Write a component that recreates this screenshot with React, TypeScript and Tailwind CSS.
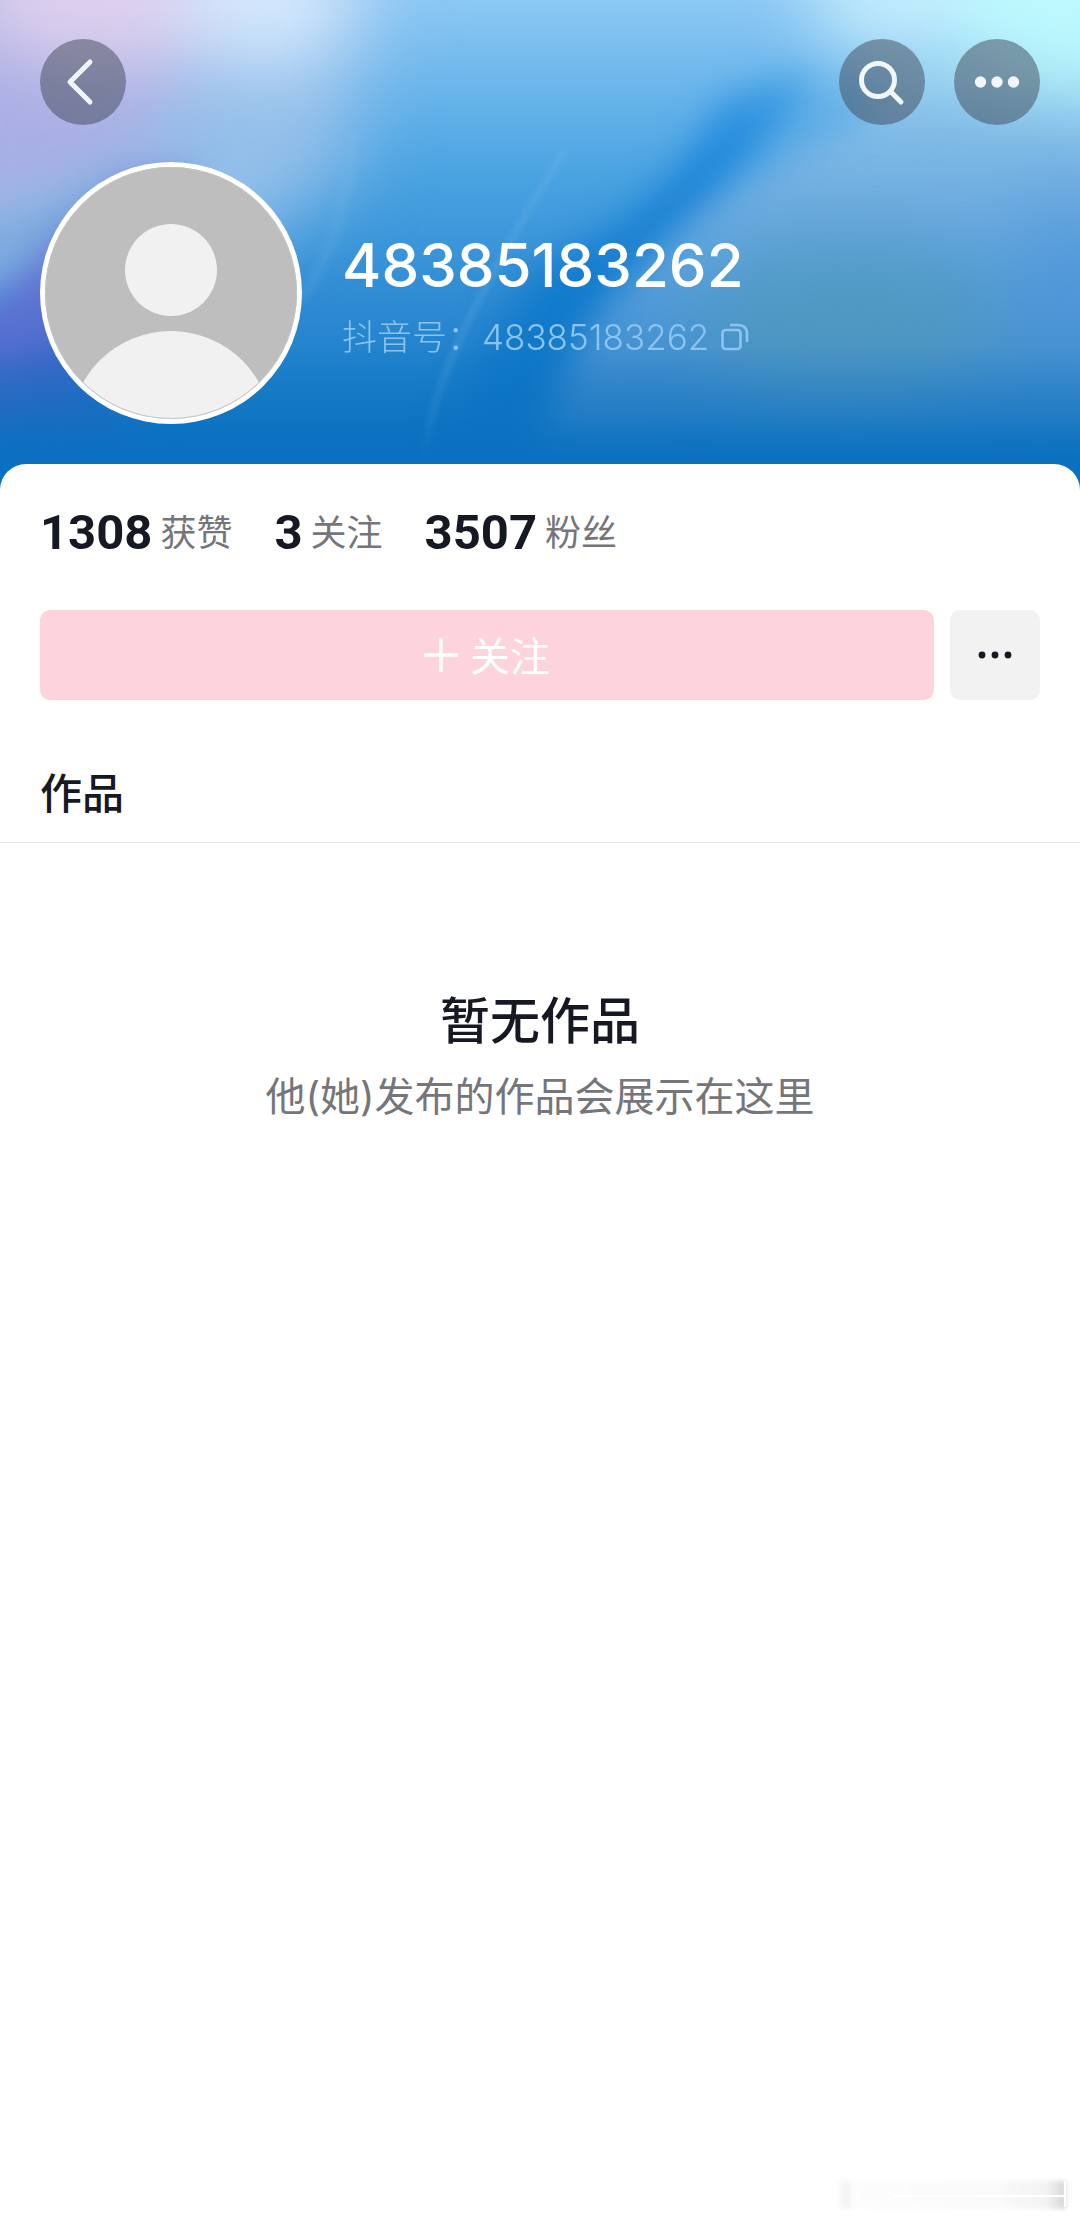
import type { ReactNode } from 'react';

const stats = [
  { value: '1308', label: '获赞' },
  { value: '3', label: '关注' },
  { value: '3507', label: '粉丝' },
];

function CoverArt() {
  return (
    <svg
      className="absolute inset-0 h-full w-full"
      viewBox="0 0 1080 500"
      preserveAspectRatio="none"
      colorInterpolationFilters="sRGB"
      aria-hidden="true"
    >
      <defs>
        <linearGradient id="base" x1="0" y1="0" x2="0" y2="1">
          <stop offset="0" stopColor="#8cc8f4" />
          <stop offset="0.2" stopColor="#66b3ea" />
          <stop offset="0.35" stopColor="#4aa3e1" />
          <stop offset="0.6" stopColor="#2f8bd3" />
          <stop offset="0.9" stopColor="#0c74c3" />
          <stop offset="1" stopColor="#0a70bf" />
        </linearGradient>
        <linearGradient id="hill" x1="0" y1="0" x2="0" y2="1">
          <stop offset="0" stopColor="#98d2f0" />
          <stop offset="0.3" stopColor="#78b3e3" />
          <stop offset="0.55" stopColor="#559edb" />
          <stop offset="0.8" stopColor="#3787c9" />
          <stop offset="1" stopColor="#0c74c3" />
        </linearGradient>
        <linearGradient id="stream" x1="0" y1="0" x2="0" y2="1">
          <stop offset="0" stopColor="#3f9fe4" />
          <stop offset="0.2" stopColor="#2389dc" />
          <stop offset="0.5" stopColor="#147ccd" />
          <stop offset="1" stopColor="#0c72c2" />
        </linearGradient>
        <linearGradient id="floor" x1="0" y1="0" x2="0" y2="1">
          <stop offset="0" stopColor="#0a70bf" stopOpacity="0" />
          <stop offset="0.6" stopColor="#0a70bf" stopOpacity="0.4" />
          <stop offset="1" stopColor="#0a70bf" />
        </linearGradient>
        <filter id="soft" x="-60%" y="-60%" width="220%" height="220%">
          <feGaussianBlur stdDeviation="38" />
        </filter>
        <filter id="mid" x="-40%" y="-40%" width="180%" height="180%">
          <feGaussianBlur stdDeviation="18" />
        </filter>
        <filter id="fine" x="-40%" y="-40%" width="180%" height="180%">
          <feGaussianBlur stdDeviation="3" />
        </filter>
      </defs>
      <rect width="1080" height="500" fill="url(#base)" />

      {/* pale lavender light on the left */}
      <g filter="url(#soft)">
        <path d="M-80 -80 H400 L360 60 L350 170 L240 250 L-80 300 Z" fill="#94bfe9" />
        <path d="M-80 -80 H180 L170 110 L120 180 L-80 230 Z" fill="#a9aee4" />
        <ellipse cx="110" cy="-5" rx="150" ry="75" fill="#ded0ee" />
        <ellipse cx="270" cy="-5" rx="90" ry="75" fill="#d4e8fd" />
      </g>
      <g filter="url(#mid)">
        <path d="M-40 330 Q40 250 130 180 L200 170 L80 390 L-40 430 Z" fill="#6069cf" opacity="0.8" />
        <path d="M-40 380 L80 340 L150 460 L-40 470 Z" fill="#2867c2" opacity="0.7" />
        <path d="M-40 230 Q50 210 130 160 L110 205 Q50 250 -40 290 Z" fill="#78a7dc" opacity="0.8" />
      </g>

      {/* deep blue stream */}
      <g filter="url(#mid)">
        <path d="M820 70 L720 100 Q660 220 550 260 Q460 350 440 490 H560 Q560 340 650 270 Q750 170 820 70 Z" fill="url(#stream)" />
      </g>

      {/* rounded hill on the right */}
      <g filter="url(#mid)">
        <path d="M530 500 Q550 360 640 270 Q740 170 860 120 L900 60 L1120 30 V500 Z" fill="url(#hill)" />
      </g>
      <g filter="url(#soft)">
        <ellipse cx="850" cy="320" rx="150" ry="80" fill="#5098b6" opacity="0.6" />
        <path d="M930 -80 H1160 V100 L1000 80 L930 40 Z" fill="#bdf9fd" />
        <ellipse cx="890" cy="-10" rx="80" ry="70" fill="#c4ecfd" />
        <ellipse cx="1070" cy="280" rx="50" ry="90" fill="#4a90d8" opacity="0.5" />
      </g>

      {/* thin highlights */}
      <g filter="url(#fine)" fill="none" stroke="#8cc7f0">
        <path d="M565 150 Q490 270 455 350 Q425 420 425 470" strokeWidth="5" opacity="0.25" />
        <path d="M352 130 Q350 230 300 300" strokeWidth="12" opacity="0.12" />
      </g>
      <rect y="350" width="1080" height="112" fill="url(#floor)" />
      <rect y="461" width="1080" height="39" fill="#0a70bf" />
    </svg>
  );
}

function RoundButton({ label, children }: { label: string; children: ReactNode }) {
  return (
    <button
      type="button"
      aria-label={label}
      className="flex size-[86px] items-center justify-center rounded-full bg-[#404858]/50 text-[#f1f6fd]"
    >
      {children}
    </button>
  );
}

function Avatar() {
  return (
    <svg className="size-[262px] shrink-0" viewBox="0 0 262 262" role="img" aria-label="头像">
      <defs>
        <clipPath id="face">
          <circle cx="131" cy="131" r="126" />
        </clipPath>
      </defs>
      <circle cx="131" cy="131" r="131" fill="#fff" />
      <g clipPath="url(#face)">
        <rect width="262" height="262" fill="#bebebe" />
        <circle cx="131" cy="108" r="46" fill="#f1f1f1" />
        <circle cx="131" cy="270" r="101" fill="#f1f1f1" />
      </g>
      <circle cx="131" cy="131" r="125.5" fill="none" stroke="#c4c4c4" />
    </svg>
  );
}

function Header() {
  return (
    <header className="relative px-10 pt-[39px] pb-[76px]">
      <CoverArt />
      <div className="relative">
        <nav className="flex items-center justify-between">
          <RoundButton label="返回">
            <svg className="size-[86px]" viewBox="0 0 86 86" fill="none" stroke="currentColor" strokeWidth="5" strokeLinecap="round" strokeLinejoin="round">
              <path d="M50 23 L30 43 L50 63" />
            </svg>
          </RoundButton>
          <div className="flex gap-[29px]">
            <RoundButton label="搜索">
              <svg className="size-[86px]" viewBox="0 0 86 86" fill="none" stroke="currentColor" strokeWidth="5" strokeLinecap="round">
                <circle cx="39" cy="41" r="16.5" />
                <path d="M52 53 L62 63" />
              </svg>
            </RoundButton>
            <RoundButton label="更多">
              <svg className="size-[86px]" viewBox="0 0 86 86" fill="currentColor">
                <circle cx="26.5" cy="43" r="5.7" />
                <circle cx="43" cy="43" r="5.7" />
                <circle cx="59.5" cy="43" r="5.7" />
              </svg>
            </RoundButton>
          </div>
        </nav>

        <div className="mt-[37px] flex items-center gap-10">
          <Avatar />
          <div className="min-w-0 pt-1 text-white">
            <h1 className="text-[60px] leading-[72px] font-medium">48385183262</h1>
            <div className="mt-3 flex items-center gap-3 text-[#8cc4ef]">
              <p className="text-[35px] leading-[48px] font-light">抖音号：48385183262</p>
              <button type="button" aria-label="复制抖音号">
                <svg className="size-7" viewBox="0 0 28 28" fill="none" stroke="currentColor" strokeWidth="2.7">
                  <rect x="1.500" y="7" width="18" height="19" rx="3" />
                  <path d="M9 2 H17 Q26 2 26 11 V19" />
                </svg>
              </button>
            </div>
          </div>
        </div>
      </div>
    </header>
  );
}

function Stats() {
  return (
    <ul className="flex gap-[42px]">
      {stats.map((s) => (
        <li key={s.label} className="flex items-center gap-2">
          <span className="font-[Roboto,sans-serif] text-[49px] leading-[58px] font-bold text-[#161823]">
            {s.value}
          </span>
          <span className="text-[36px] leading-[58px] text-[#75757a]">{s.label}</span>
        </li>
      ))}
    </ul>
  );
}

// Fading scroll mark in the bottom corner
function CornerMark() {
  return (
    <svg className="h-10 w-[240px]" viewBox="0 0 240 40" aria-hidden="true">
      <defs>
        <linearGradient id="fade" x1="0" y1="0" x2="1" y2="0">
          <stop offset="0" stopColor="#f4f4f4" stopOpacity="0" />
          <stop offset="0.04" stopColor="#f2f2f2" />
          <stop offset="0.08" stopColor="#fdfdfd" />
          <stop offset="0.7" stopColor="#fafafa" />
          <stop offset="0.92" stopColor="#f3f3f3" />
          <stop offset="1" stopColor="#d4d4d4" />
        </linearGradient>
        <filter id="smudge">
          <feGaussianBlur stdDeviation="2" />
        </filter>
      </defs>
      <rect x="4" y="4" width="230" height="28" fill="url(#fade)" filter="url(#smudge)" />
      <path d="M60 19 H232 M233 4 V30" stroke="#fff" strokeWidth="2" fill="none" />
    </svg>
  );
}

export default function App() {
  return (
    <div className="flex min-h-screen w-full flex-col bg-white font-[Inter,'Noto_Sans_CJK_SC',sans-serif]">
      <Header />

      <main className="relative -mt-9 rounded-t-[26px] bg-white">
        <section className="px-10 pt-10">
          <Stats />
          <div className="mt-12 flex gap-4">
            <button
              type="button"
              className="flex h-[90px] flex-1 items-center justify-center gap-3 rounded-[10px] bg-[#fdd3dc] text-[40px] text-white"
            >
              <svg className="size-[34px]" viewBox="0 0 34 34" stroke="currentColor" strokeWidth="3.5" aria-hidden="true">
                <path d="M17 0 V34 M0 17 H34" />
              </svg>
              <span className="pt-1">关注</span>
            </button>
            <button
              type="button"
              aria-label="更多操作"
              className="flex size-[90px] items-center justify-center rounded-[10px] bg-[#f2f2f2] text-[#161823]"
            >
              <svg className="h-2 w-[34px]" viewBox="0 0 34 8" fill="currentColor">
                <circle cx="4" cy="4" r="3.4" />
                <circle cx="17" cy="4" r="3.4" />
                <circle cx="30" cy="4" r="3.4" />
              </svg>
            </button>
          </div>
        </section>

        <h2 className="mt-16 border-b border-[#e3e3e4] px-10 pb-[18px] text-[42px] leading-[60px] font-medium text-[#161823]">
          作品
        </h2>

        <section className="pt-[142px] text-center">
          <h3 className="text-[50px] leading-[72px] font-medium text-[#161823]">暂无作品</h3>
          <p className="mt-3 text-[40px] leading-[56px] text-[#75757a]">他(她)发布的作品会展示在这里</p>
        </section>
      </main>

      <footer className="mt-auto flex justify-end pr-2 pb-1">
        <CornerMark />
      </footer>
    </div>
  );
}
